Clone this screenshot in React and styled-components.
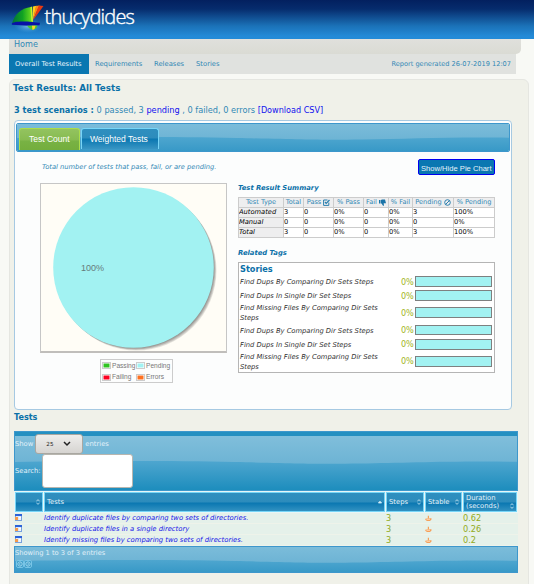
import React from "react";
import styled, { createGlobalStyle, css } from "styled-components";

const Global = createGlobalStyle`
  * { box-sizing: border-box; }
  html, body { margin: 0; height: 584px; overflow: hidden; background: #f8f9f5; }
  body { font-family: "DejaVu Sans", Verdana, sans-serif; font-size: 7px; color: #1f1f1f; }
`;

const Text = styled.span`
  display: block;
  white-space: nowrap;
  font-size: ${(p) => p.$size || 6.8}px;
  line-height: ${(p) => p.$lh || 10}px;
  letter-spacing: ${(p) => p.$ls || 0}px;
  color: ${(p) => p.$color || "inherit"};
  font-weight: ${(p) => (p.$bold ? 700 : 400)};
  font-style: ${(p) => (p.$italic ? "italic" : "normal")};
  ${(p) => p.$sans && css`font-family: "Liberation Sans", Arial, sans-serif;`}
`;

const Page = styled.div`width: 534px; height: 584px; overflow: hidden; display: flex; flex-direction: column;`;
const Header = styled.header`
  height: 39px; flex: none; display: flex; padding-left: 9px;
  background: linear-gradient(#03205f 0, #062c6d 9px, #1b72b8 26px, #238ad7 36px, #238bd8 39px);
`;
const Wordmark = styled.div`
  font: 300 20px/24px "Open Sans", "Noto Sans", sans-serif;
  letter-spacing: -0.8px; color: #fff; margin: 5px 0 0 0.5px; -webkit-text-stroke: 0.4px #fff;
`;
const Crumbs = styled.div`
  width: 512px; height: 15px; flex: none; margin-left: 9px; padding-left: 5px;
  background: linear-gradient(#e0e0dc, #dadbd4); border-radius: 0 0 5px 0;
`;
const Nav = styled.nav`
  width: 507px; height: 20px; flex: none; margin-left: 9px; padding-right: 5px;
  display: flex; align-items: center; background: #e0e2df;
`;
const NavItem = styled.div`
  width: ${(p) => p.$w}px; height: 20px; padding: 5px 0 0 6px;
  background: ${(p) => (p.$active ? "#0a77b1" : "transparent")};
  color: ${(p) => (p.$active ? "#e6f3fb" : "#3188b5")};
`;
const Spacer = styled.div`flex: 1;`;
const Content = styled.main`
  width: 520px; height: 520px; flex: none; margin: 5px 0 0 9px; padding: 0 0 0 4px;
  background: #f0f1e9; border: 1px solid #e5e6e1; border-radius: 6px;
  display: flex; flex-direction: column;
`;
const PageTitle = styled.h2`margin: 0 0 0 -1px; height: 16px; flex: none;`;
const Stats = styled.div`display: flex; height: 12px; flex: none; margin: 9px 0 3px;`;
const TabsBox = styled.section`
  width: 498px; height: 290px; flex: none; padding: 2px 1px;
  background: #fcfdfd; border: 1px solid #a6c9e2; border-radius: 4px;
`;
const Strip = styled.div`
  position: relative; isolation: isolate; width: ${(p) => p.$w}px; height: ${(p) => p.$h}px; flex: none;
  border: 1px solid #3d97cc; border-radius: ${(p) => p.$r || 0}px; overflow: hidden; color: #e2f1f9;
`;
const WaveSvg = styled.svg`position: absolute; inset: 0; width: 100%; height: 100%; z-index: -1;`;
const TabRow = styled.div`display: flex; gap: 1px; padding: 4px 0 0 2px;`;
const Tab = styled.div`
  width: ${(p) => (p.$active ? 61 : 78)}px; height: ${(p) => (p.$active ? 22 : 21)}px;
  border: 1px solid ${(p) => (p.$active ? "#acdd4a" : "#77d5f7")}; border-bottom: 0; border-radius: 3px 3px 0 0;
  background: ${(p) => (p.$active
    ? "linear-gradient(#93c360 0, #87bb50 11px, #78b244 12px, #73ad3c 22px)"
    : "linear-gradient(#2f8fbf 0, #2d8cbc 9px, #0a77b1 10px, #3c98c5 21px)")};
  padding: 5px 0 0 ${(p) => (p.$active ? 9 : 8)}px; color: #fff;
`;
const Body = styled.div`display: flex;`;
const Left = styled.div`width: 222px; padding: 10px 0 0 24px;`;
const Caption = styled.div`height: 21px; padding-left: 2px;`;
const ChartBox = styled.div`
  width: 187px; height: 170px; background: #fffdf6; border: 1px solid #c6c6c6; border-bottom: 2px solid #c0bebb;
`;
const Legend = styled.div`
  width: 73px; height: 24px; margin: 6px 0 0 60px; padding: 0 0 0 1px;
  border: 1px solid #ccc; display: grid; grid-template-columns: 34px 37px; grid-template-rows: 11px 12px;
`;
const LegendItem = styled.div`display: flex; align-items: center; gap: 1px; color: #777;`;
const Swatch = styled.i`width: 9px; height: 7px; flex: none; border: 1px solid #ccc; box-shadow: inset 0 0 0 0.5px #fff; background: ${(p) => p.$c};`;
const Right = styled.div`width: 257px; display: flex; flex-direction: column;`;
const PieButton = styled.button`
  all: unset; box-sizing: border-box; align-self: flex-end; width: 77px; height: 16px; margin-top: 7px;
  border: 1px solid #0000f0; border-radius: 2px; background: #0a77b1; color: #e6f3fb; padding: 2px 0 0 2px;
`;
const SubTitle = styled.h4`margin: ${(p) => p.$mt}px 0 ${(p) => p.$mb}px; height: 10px;`;
const Summary = styled.div`
  width: 257px; height: 41px; display: grid;
  grid-template: repeat(4, 9px) / 44px 19px 29px 29px 24px 23px 40px 40px;
  gap: 1px; padding: 1px; background: #ccc;
`;
const Cell = styled.div`
  background: ${(p) => (p.$head ? "#eeeeef" : "#fff")}; overflow: hidden; display: flex; gap: 2px;
  justify-content: ${(p) => (p.$center ? "center" : "flex-start")}; align-items: center;
`;
const Tags = styled.div`width: 257px; height: 111px; border: 1px solid #b5b5b5; background: #fff; padding: 1px 0 0 1px;`;
const TagRow = styled.div`
  display: grid; grid-template-columns: 161px 14px 77px; align-items: center; height: ${(p) => p.$h}px; line-height: 10px;
`;
const TagBar = styled.div`width: 77px; height: ${(p) => p.$h || 11}px; margin-top: -1px; border: 1px solid #7e8080; background: #a2f2f2;`;
const SectionTitle = styled.h3`margin: 0 0 7px; height: 14px; flex: none;`;
const ShowRow = styled.div`display: flex; align-items: center; height: 20px; margin-top: 2px;`;
const SearchRow = styled.div`display: flex; align-items: center; height: 34px;`;
const SelectBox = styled.div`
  width: 48px; height: 20px; margin: 0 2px 0 2px; border: 1px solid #a9a7a1; border-radius: 3px;
  background: linear-gradient(#eeedeb, #d6d4d1); display: flex; align-items: center; padding-left: 10px; gap: 10px; color: #222;
`;
const SearchBox = styled.input`
  width: 91px; height: 34px; margin: 0 0 0 1px; padding: 0; border: 1px solid #b8b6af; border-radius: 3px; background: #fff;
`;
const HeadRow = styled.div`
  width: 504px; height: 22px; flex: none; padding: 1px 1px 0; display: grid; gap: 1px; background: #e8f6f6;
  grid-template-columns: 28px 341px 38px 37px 54px;
`;
const HeadCell = styled.div`
  height: 20px; border: 1px solid #77d5f7; color: #e4f2fa;
  background: linear-gradient(#2f8fbf 0, #2d8cbc 9px, #0a77b1 10px, #3c98c5 20px);
  display: flex; align-items: center; justify-content: space-between; padding: 0 2px;
`;
const HeadLabel = styled.div`height: ${(p) => (p.$two ? 17 : 10)}px;`;
const IconSlot = styled.div`display: flex; align-self: ${(p) => (p.$low ? "flex-end" : "center")}; padding-bottom: ${(p) => (p.$low ? 2 : 0)}px;`;
const DataRow = styled.div`
  width: 504px; height: 11px; flex: none; padding-left: 1px; display: grid; background: #e5f1ea;
  grid-template-columns: 29px 342px 39px 38px 54px; border-bottom: 1px solid #eef3ea; align-items: center;
`;
const Pager = styled.div`display: flex; gap: 0; padding-left: 1px;`;
const PageButton = styled.div`
  width: 8px; height: 8px; border: 1px solid #77c5e7; border-radius: 2px; background: #3b9bc6; display: flex;
`;

function Wave({ w, h, mid, top, bottom, band }) {
  const id = `wave-${w}-${h}`;
  return (
    <WaveSvg viewBox={`0 0 ${w} ${h}`} preserveAspectRatio="none">
      <defs>
        <linearGradient id={`${id}-t`} x2="0" y2="1"><stop stopColor={top[0]} /><stop offset="1" stopColor={top[1]} /></linearGradient>
        <linearGradient id={`${id}-b`} x2="0" y2="1"><stop stopColor={bottom[0]} /><stop offset="1" stopColor={bottom[1]} /></linearGradient>
      </defs>
      <rect width={w} height={mid + 4} fill={`url(#${id}-t)`} />
      <path d={`M0 ${mid + 1}C60 ${mid} 150 ${mid - 0.5} 220 ${mid + 1}S300 ${mid + 3.2} 345 ${mid + 2.6}S430 ${mid} ${w} ${mid + 0.8}V${h}H0Z`} fill={`url(#${id}-b)`} />
      {band && <rect width={w} height={band} fill="#2490c1" />}
    </WaveSvg>
  );
}

function Logo() {
  return (
    <svg width="35" height="34" viewBox="9 0 35 34">
      <defs>
        <linearGradient id="fan"><stop stopColor="#00703a" /><stop offset=".5" stopColor="#10a322" /><stop offset="1" stopColor="#7be620" /></linearGradient>
        <radialGradient id="glow"><stop stopColor="#b9e5ff" stopOpacity=".6" /><stop offset="1" stopColor="#4aa9e8" stopOpacity="0" /></radialGradient>
      </defs>
      <ellipse cx="28" cy="26" rx="14" ry="7" fill="url(#glow)" />
      <path d="M12 23.5C14 15 21 8 31 7L33 23Z" fill="url(#fan)" />
      <path d="M30.5 7L32.2 6.5L33 22L31.4 21Z" fill="#c9f12b" />
      <path d="M33 6.5L36.5 5.8L32.8 20Z" fill="#ffd21c" />
      <path d="M35.8 6L39.5 5.4L33 20Z" fill="#ff8a16" />
      <path d="M38.8 5.4L43.5 6L33.2 20Z" fill="#e93a12" />
      <path d="M11.6 24C13 21.5 22 21.2 32 22L40 22.8L39.5 25.3L29 25.8L12 24.8Z" fill="#0812a6" />
      <path d="M27 25.7L37.5 25.4L36.5 28L33 30.3L29 28Z" fill="#49c92c" />
      <path d="M32 25.7H35.5L34.5 29L32.5 30Z" fill="#ffd52a" />
    </svg>
  );
}

const CheckIcon = () => <svg width="7" height="7" viewBox="0 0 7 7" fill="none" stroke="#2a7fae"><path d="M5.8 3.5V6.4H.6V1H4.5" /><path d="M2 3L3.2 4.4L6.5 1" strokeWidth="1.3" /></svg>;
const ThumbIcon = () => <svg width="7" height="7" viewBox="0 0 7 7" fill="#1b74a8"><path d="M0 1H1.5V4.4H0ZM2 1L3 .5H6L7 4.2H4.7L5 6.7H4L2.6 4.4H2Z" /></svg>;
const BanIcon = () => <svg width="7" height="7" viewBox="0 0 7 7" fill="none" stroke="#2a7fae"><circle cx="3.5" cy="3.5" r="2.8" /><path d="M1.5 5.5L5.5 1.5" /></svg>;
const SortIcon = ({ up }) => (
  <svg width="4" height="6" viewBox="0 0 4 6" fill="none" stroke="#d8f0fb" strokeWidth=".8">
    {up ? <path d="M.4 4L2 2.2L3.6 4Z" fill="#d8f0fb" /> : <path d="M.4 2.3L2 .6L3.6 2.3M.4 3.7L2 5.4L3.6 3.7" />}
  </svg>
);
const ReportIcon = () => <svg width="8" height="8" viewBox="0 0 8 8"><rect x=".5" y=".5" width="6" height="6" fill="#dce8fa" stroke="#78a0dc" /><path d="M0 0H7V2H0Z" fill="#2d62d8" /><path d="M0 3H3V6H0Z" fill="#f59a4a" /><path d="M4 3.5H6M4 5H6" stroke="#fff" /></svg>;
const StableIcon = () => <svg width="7" height="7" viewBox="0 0 7 7"><path d="M2.8 .8H4V3.2H6.5V4.6L5 6H2L.3 4.8V3.8L2.8 3.2Z" fill="#f6a05a" /><path d="M1.5 4.2H5" stroke="#fff1dd" strokeWidth=".8" /></svg>;
const ChevronIcon = () => <svg width="8" height="6" viewBox="0 0 8 6" fill="none" stroke="#222" strokeWidth="1.5"><path d="M1 1L4 4L7 1" /></svg>;
const ArrowIcon = ({ back }) => <svg width="6" height="6" viewBox="0 0 6 6" fill="none" stroke="#a9dcf3" strokeWidth=".9"><circle cx="3" cy="3" r="2.2" /><path d={back ? "M3.5 2L2.3 3L3.5 4" : "M2.5 2L3.7 3L2.5 4"} /></svg>;

const summaryRows = [
  ["Automated", "3", "0", "0%", "0", "0%", "3", "100%"],
  ["Manual", "0", "0", "0%", "0", "0%", "0", "0%"],
  ["Total", "3", "0", "0%", "0", "0%", "3", "100%"],
];
const heads = [["Test Type"], ["Total"], ["Pass", CheckIcon], ["% Pass"], ["Fail", ThumbIcon], ["% Fail"], ["Pending", BanIcon], ["% Pending"]];
const tags = [
  [["Find Dups By Comparing Dir Sets Steps"], 14, 11],
  [["Find Dups In Single Dir Set Steps"], 14, 11],
  [["Find Missing Files By Comparing Dir Sets", "Steps"], 20, 11],
  [["Find Dups By Comparing Dir Sets Steps"], 15, 10],
  [["Find Dups In Single Dir Set Steps"], 13, 11],
  [["Find Missing Files By Comparing Dir Sets", "Steps"], 21, 11],
];
const legend = [["Passing", "#30c422"], ["Pending", "#a2f2f2"], ["Failing", "#fc0020"], ["Errors", "#fd7020"]];
const columns = [[], ["Tests"], ["Steps"], ["Stable"], ["Duration", "(seconds)"]];
const tests = [
  ["Identify duplicate files by comparing two sets of directories.", "0.62"],
  ["Identify duplicate files in a single directory", "0.26"],
  ["Identify missing files by comparing two sets of directories.", "0.2"],
];

export default function App() {
  return (
    <Page>
      <Global />
      <Header><Logo /><Wordmark>thucydides</Wordmark></Header>
      <Crumbs><Text $size={8.1} $color="#3188b5">Home</Text></Crumbs>
      <Nav>
        <NavItem $active $w={80}><Text>Overall Test Results</Text></NavItem>
        <NavItem $w={59}><Text>Requirements</Text></NavItem>
        <NavItem $w={42}><Text>Releases</Text></NavItem>
        <NavItem $w={50}><Text>Stories</Text></NavItem>
        <Spacer />
        <Text $size={6.6} $color="#3188b5">Report generated 26-07-2019 12:07</Text>
      </Nav>
      <Content>
        <PageTitle><Text $size={8.75} $lh={16} $bold $color="#0a70a8">Test Results: All Tests</Text></PageTitle>
        <Stats>
          <Text $size={8.2} $bold $color="#0a70a8">3 test scenarios :&nbsp;</Text>
          <Text $size={8.2} $color="#3188b5">0 passed, 3&nbsp;</Text>
          <Text $size={8.2} $color="#1010ee">pending</Text>
          <Text $size={8.2} $color="#3188b5">&nbsp;, 0 failed, 0 errors&nbsp;</Text>
          <Text $size={8.1} $color="#1010ee">[Download CSV]</Text>
        </Stats>
        <TabsBox>
          <Strip $w={494} $h={29} $r={2}>
            <Wave w={492} h={27} mid={13} top={["#7bbcda", "#6cb3d4"]} bottom={["#4ea6cf", "#3899c7"]} />
            <TabRow>
              <Tab $active><Text $sans $size={8.5}>Test Count</Text></Tab>
              <Tab><Text $sans $size={8.5}>Weighted Tests</Text></Tab>
            </TabRow>
          </Strip>
          <Body>
            <Left>
              <Caption><Text $size={6.7} $italic $color="#3188b5">Total number of tests that pass, fail, or are pending.</Text></Caption>
              <ChartBox>
                <svg width="185" height="167" viewBox="41 184 185 167">
                  {[3, 2.4, 1.8, 1.2, 0.6].map((d) => <circle key={d} cx={133.5 + d} cy={267.5 + d} r="80" fill="#000" fillOpacity=".1" />)}
                  <circle cx="133.5" cy="267.5" r="80.3" fill="#a2f2f2" />
                  <text x="81" y="271" fontFamily="Liberation Sans, Arial, sans-serif" fontSize="9" fill="#667b7b">100%</text>
                </svg>
              </ChartBox>
              <Legend>
                {legend.map(([t, c]) => (
                  <LegendItem key={t}><Swatch $c={c} /><Text $sans $size={6.6}>{t}</Text></LegendItem>
                ))}
              </Legend>
            </Left>
            <Right>
              <PieButton><Text $sans $size={7.6} $lh={9}>Show/Hide Pie Chart</Text></PieButton>
              <SubTitle $mt={8} $mb={4}><Text $bold $italic $color="#0a70a8">Test Result Summary</Text></SubTitle>
              <Summary>
                {heads.map(([t, Icon]) => <Cell key={t} $head $center><Text $size={6.6} $color="#3188b5" $lh={9}>{t}</Text>{Icon && <Icon />}</Cell>)}
                {summaryRows.flatMap((r) => r.map((v, i) => <Cell key={r[0] + i} $head={i === 0}><Text $size={6.7} $color="#000" $italic={i === 0} $lh={9}>{v}</Text></Cell>))}
              </Summary>
              <SubTitle $mt={10} $mb={4}><Text $bold $italic $color="#0a70a8">Related Tags</Text></SubTitle>
              <Tags>
                <Text $bold $size={8.2} $lh={11} $color="#0a70a8">Stories</Text>
                {tags.map(([lines, h, bar], i) => (
                  <TagRow key={i} $h={h}>
                    <div>{lines.map((l) => <Text key={l} $size={6.75} $italic $color="#333">{l}</Text>)}</div>
                    <Text $size={8.1} $ls={-0.2} $color="#a1b524" $lh={11}>0%</Text>
                    <TagBar $h={bar} />
                  </TagRow>
                ))}
              </Tags>
            </Right>
          </Body>
        </TabsBox>
        <SectionTitle><Text $bold $size={8.1} $lh={14} $color="#0a70a8">Tests</Text></SectionTitle>
        <Strip $w={504} $h={60}>
          <Wave w={502} h={58} mid={29} band={4} top={["#83c0dc", "#6cb3d4"]} bottom={["#4ea6cf", "#1d8dbd"]} />
          <ShowRow>
            <Text>Show</Text>
            <SelectBox><Text $size={5.6}>25</Text><ChevronIcon /></SelectBox>
            <Text>entries</Text>
          </ShowRow>
          <SearchRow><Text>Search:</Text><SearchBox aria-label="Search" /></SearchRow>
        </Strip>
        <HeadRow>
          {columns.map((lines, i) => (
            <HeadCell key={i}>
              <HeadLabel $two={lines.length === 2}>
                {lines.map((l) => <Text key={l} $lh={lines.length === 2 ? 8.5 : 10}>{l}</Text>)}
              </HeadLabel>
              <IconSlot $low={i === 4}><SortIcon up={i === 1} /></IconSlot>
            </HeadCell>
          ))}
        </HeadRow>
        {tests.map(([name, time]) => (
          <DataRow key={name}>
            <ReportIcon />
            <Text $italic $color="#1616e8" $size={6.8}>{name}</Text>
            <Text $size={8.2} $color="#93aa20">3</Text>
            <StableIcon />
            <Text $size={8.2} $color="#93aa20">{time}</Text>
          </DataRow>
        ))}
        <Strip $w={504} $h={27}>
          <Wave w={502} h={25} mid={13} top={["#7bbcda", "#6cb3d4"]} bottom={["#4ea6cf", "#3899c7"]} />
          <Text $size={6.7} $lh={13}>Showing 1 to 3 of 3 entries</Text>
          <Pager><PageButton><ArrowIcon back /></PageButton><PageButton><ArrowIcon /></PageButton></Pager>
        </Strip>
      </Content>
    </Page>
  );
}
